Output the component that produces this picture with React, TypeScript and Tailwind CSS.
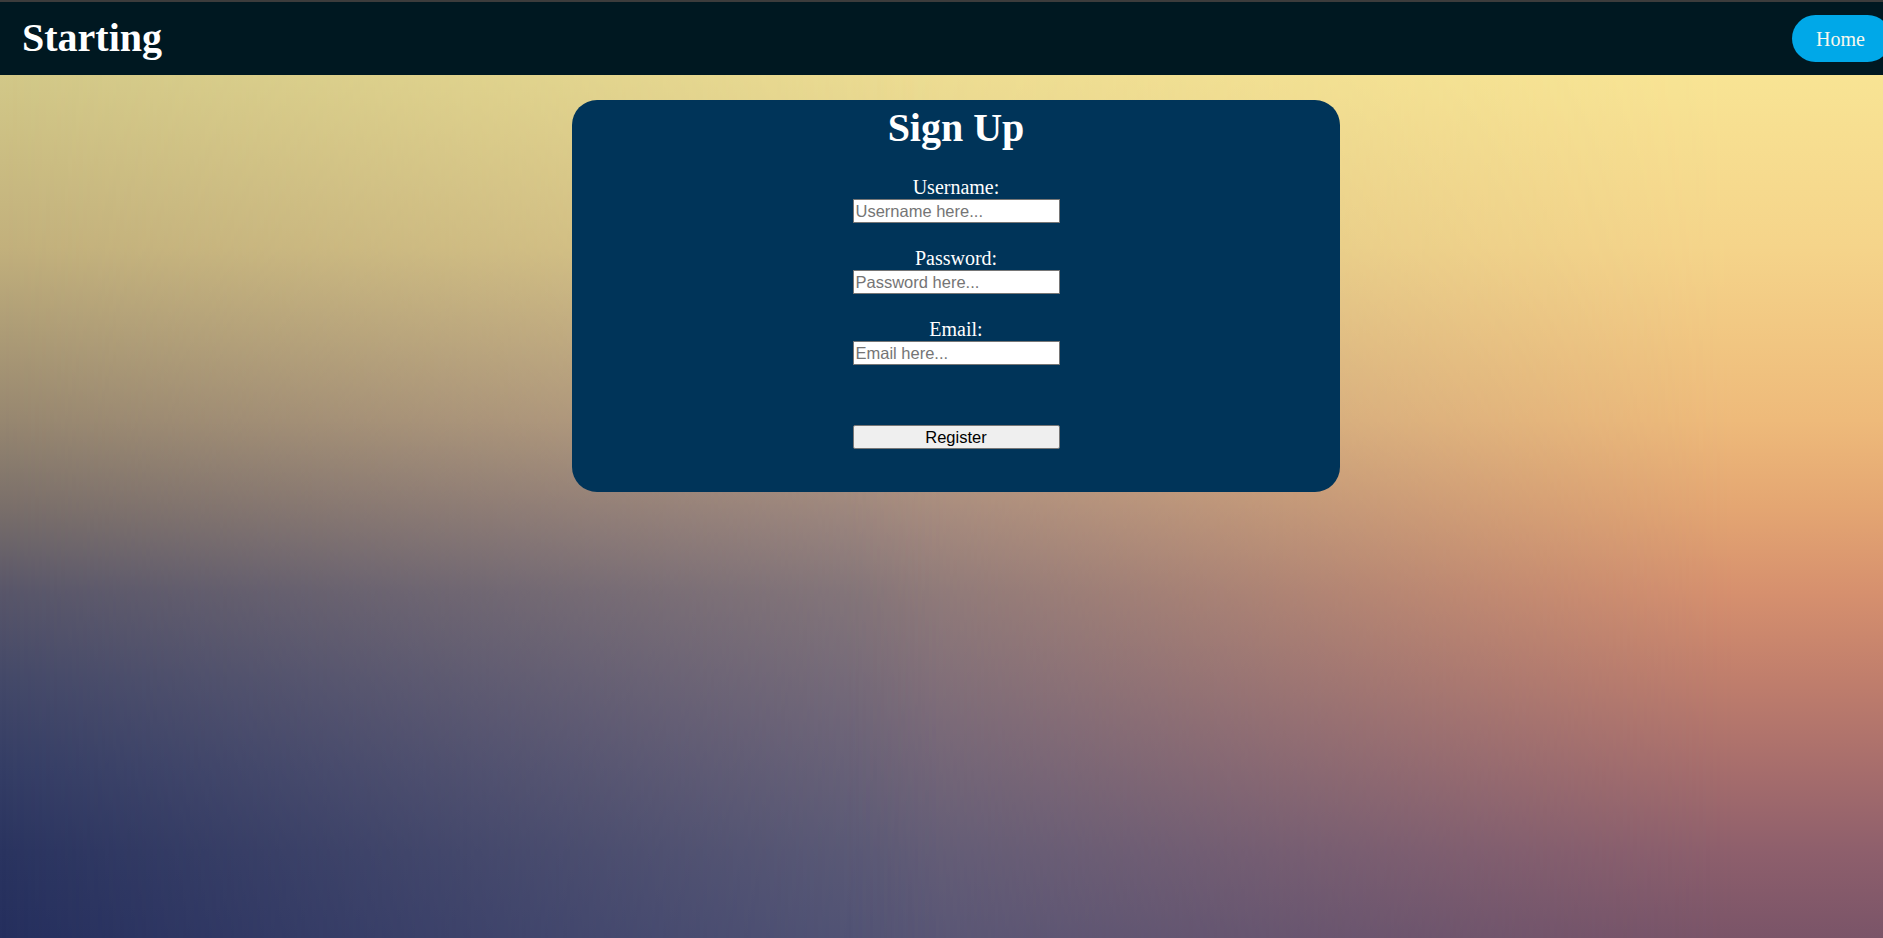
export default function App() {
  return (
    <div className="flex h-screen flex-col overflow-hidden bg-[#3c3c3c] pt-[2px] font-['Liberation_Serif',serif]">
      {/* Header */}
      <header className="flex h-[73px] shrink-0 items-start justify-between overflow-hidden bg-[#001821]">
        <h1 className="ml-[22px] mt-[13px] text-[40px] font-bold leading-[46px] text-white">Starting</h1>
        <button className="mr-[-8px] mt-[13px] h-[47px] w-[99px] rounded-full bg-[#00a8e8] pr-[2px] text-[20px] leading-[48px] text-[#f8f8ee]">
          Home
        </button>
      </header>

      {/* Main area with sunset background */}
      <main className="relative flex-1 bg-[linear-gradient(to_bottom,#d2c888_0%,#c2b07c_20%,#978770_40%,#7a6f6a_50%,#58566a_60%,#444969_70%,#353e66_80%,#2a3460_90%,#252f5e_100%)]">
        <div className="absolute inset-0 bg-[linear-gradient(to_bottom,#ecdc92_0%,#dcc88a_20%,#bea284_40%,#a28a80_50%,#88787b_60%,#74697a_75%,#5f5d78_90%,#565777_100%)] [mask-image:linear-gradient(to_right,transparent_0%,black_50%)]" />
        <div className="absolute inset-0 bg-[linear-gradient(to_bottom,#f8e494_0%,#f5d48a_20%,#eeba7a_40%,#e4a672_50%,#d6906e_60%,#c07e6c_70%,#a86e6c_80%,#8e5f6c_90%,#7a5468_100%)] [mask-image:linear-gradient(to_right,transparent_45%,black_92%)]" />

        {/* Sign up card */}
        <div className="relative ml-[572px] mt-[25px] flex h-[392px] w-[768px] flex-col items-center rounded-[25px] bg-[#003459] pt-[5px] text-white">
          <h2 className="text-[40px] font-bold leading-[46px]">Sign Up</h2>

          <label className="mt-[25px] text-[20px] leading-[23px]">Username:</label>
          <input
            type="text"
            placeholder="Username here..."
            className="h-[24px] w-[207px] border border-[#767676] bg-white px-[2px] font-['Liberation_Sans',Arial,sans-serif] text-[16.5px] text-black placeholder-[#757575] outline-none"
          />

          <label className="mt-[24px] text-[20px] leading-[23px]">Password:</label>
          <input
            type="password"
            placeholder="Password here..."
            className="h-[24px] w-[207px] border border-[#767676] bg-white px-[2px] font-['Liberation_Sans',Arial,sans-serif] text-[16.5px] text-black placeholder-[#757575] outline-none"
          />

          <label className="mt-[24px] text-[20px] leading-[23px]">Email:</label>
          <input
            type="email"
            placeholder="Email here..."
            className="h-[24px] w-[207px] border border-[#767676] bg-white px-[2px] font-['Liberation_Sans',Arial,sans-serif] text-[16.5px] text-black placeholder-[#757575] outline-none"
          />

          <button className="mt-[60px] h-[24px] w-[207px] rounded-[2px] border border-[#767676] bg-[#efefef] font-['Liberation_Sans',Arial,sans-serif] text-[16.5px] leading-[22px] text-black">
            Register
          </button>
        </div>
      </main>
    </div>
  );
}
